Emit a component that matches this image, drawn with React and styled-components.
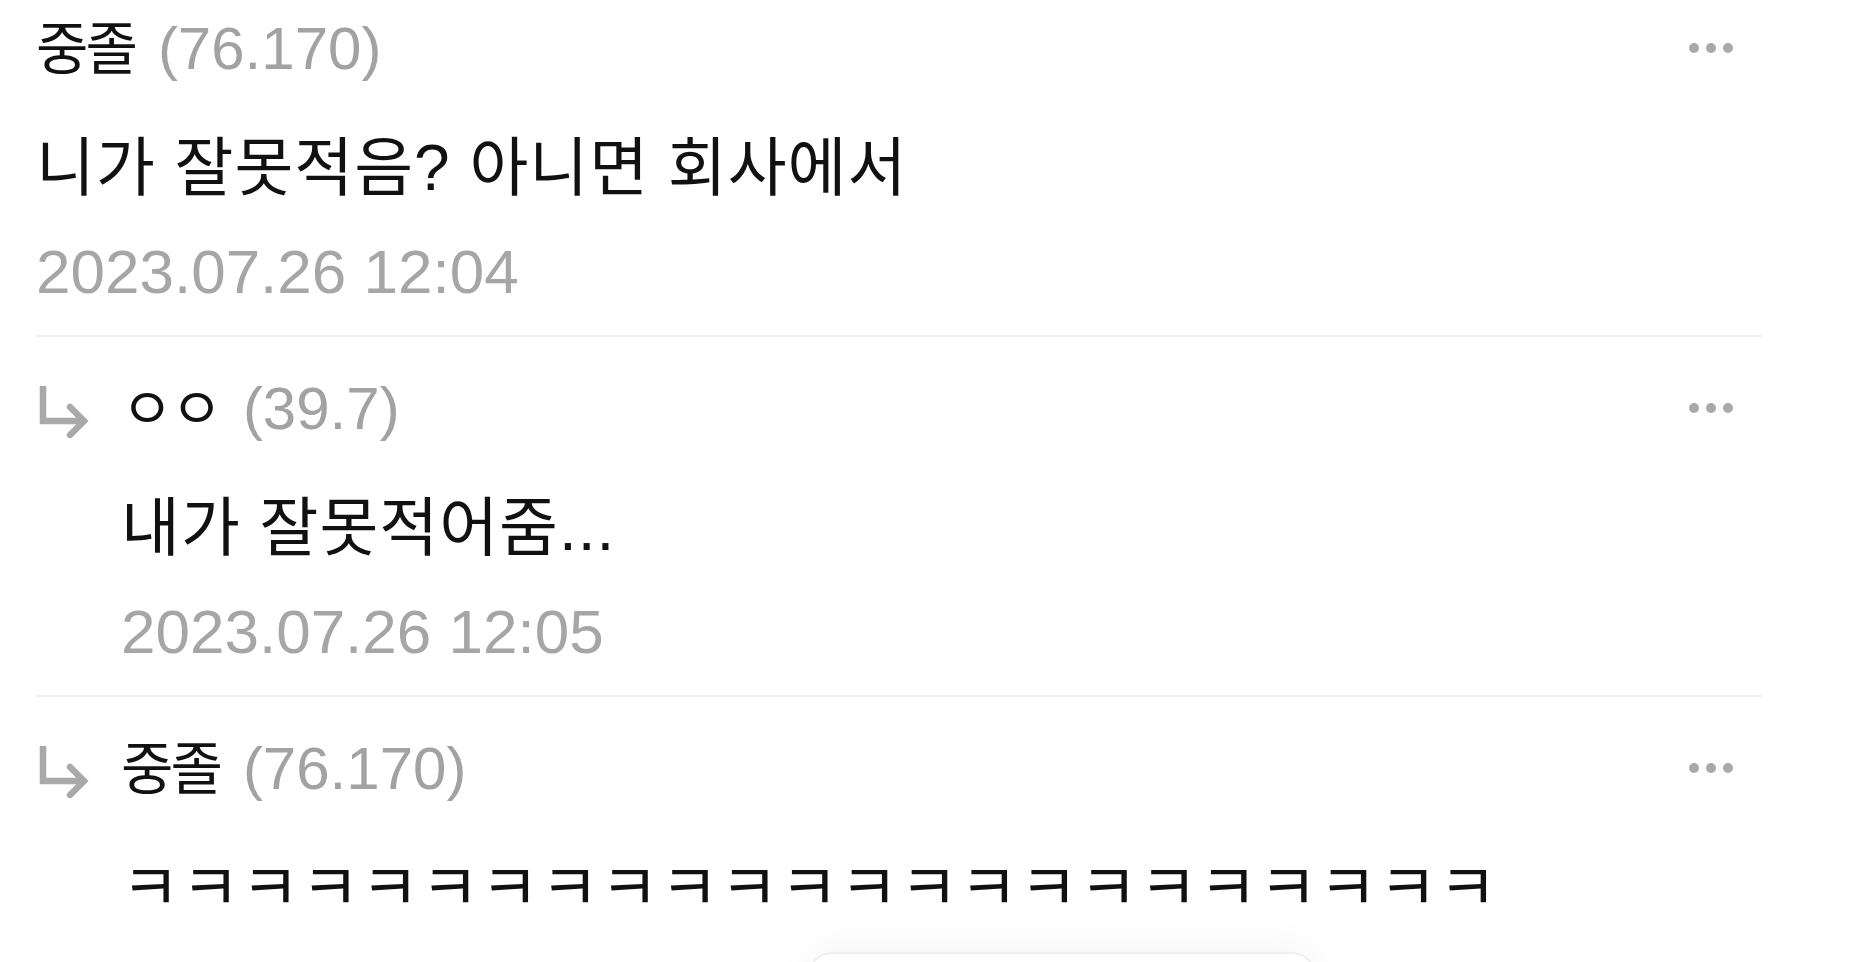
import React from 'react';
import styled, { createGlobalStyle } from 'styled-components';

const Global = createGlobalStyle`
  html, body {
    margin: 0;
    padding: 0;
    background: #ffffff;
    overflow: hidden;
  }
  body {
    font-family: "Liberation Sans", "Noto Sans CJK KR", sans-serif;
    color: #111111;
  }
`;

const Page = styled.main`
  position: relative;
  box-sizing: border-box;
  height: 962px;
  overflow: hidden;
  padding: 0 108px 0 36px;
  background: #ffffff;
`;

const Comment = styled.article`
  display: flex;
  align-items: flex-start;
  padding: ${(p) => (p.$first ? '14px' : '37px')} 0 28px;
  border-bottom: ${(p) => (p.$last ? 'none' : '2px solid #efefef')};
`;

const ReplyMark = styled.div`
  flex: none;
  width: 85px;
  height: 70px;
  display: flex;
  align-items: center;
  padding-left: 2px;
  padding-top: 6px;
  box-sizing: border-box;
`;

const Content = styled.div`
  flex: 1;
  min-width: 0;
  display: flex;
  flex-direction: column;
`;

const Header = styled.div`
  display: flex;
  align-items: center;
  justify-content: space-between;
  height: 70px;
`;

const Author = styled.div`
  display: flex;
  align-items: center;
  line-height: 70px;
  white-space: nowrap;
`;

const Name = styled.span`
  font-size: 57px;
  color: #111111;
  letter-spacing: -3px;
`;

const Score = styled.span`
  font-size: 60px;
  color: #a2a2a2;
  margin-left: 23px;
`;

const More = styled.div`
  display: flex;
  align-items: center;
  gap: 7px;
  margin-right: 29px;
  margin-top: -3px;
`;

const Dot = styled.span`
  width: 10px;
  height: 10px;
  border-radius: 50%;
  background: #a9a9a9;
`;

const Body = styled.p`
  margin: 46px 0 0;
  font-size: 64px;
  line-height: 76px;
  color: #111111;
  white-space: nowrap;
  letter-spacing: 1px;
`;

const Time = styled.div`
  margin-top: 31px;
  font-size: 62px;
  line-height: 70px;
  color: #a6a6a6;
`;

const FloatingBar = styled.div`
  position: absolute;
  left: 808px;
  top: 952px;
  width: 504px;
  height: 80px;
  border-radius: 24px;
  border: 2px solid #efefef;
  background: #ffffff;
  box-shadow: 0 -6px 40px rgba(0, 0, 0, 0.04);
`;

const ReplyArrow = () => (
  <svg width="52" height="60" viewBox="0 0 52 60" aria-hidden="true">
    <path
      d="M5 4 V39 H46"
      fill="none"
      stroke="#a9a9a9"
      strokeWidth="6.5"
      strokeLinejoin="miter"
    />
    <path
      d="M32 25 L46 39 L32 53"
      fill="none"
      stroke="#a9a9a9"
      strokeWidth="6.5"
      strokeLinecap="round"
      strokeLinejoin="miter"
    />
  </svg>
);

const MoreDots = () => (
  <More>
    <Dot />
    <Dot />
    <Dot />
  </More>
);

const comments = [
  {
    id: 1,
    name: '중졸',
    score: '(76.170)',
    body: '니가 잘못적음? 아니면 회사에서',
    time: '2023.07.26 12:04',
    reply: false,
  },
  {
    id: 2,
    name: 'ㅇㅇ',
    score: '(39.7)',
    body: '내가 잘못적어줌...',
    time: '2023.07.26 12:05',
    reply: true,
  },
  {
    id: 3,
    name: '중졸',
    score: '(76.170)',
    body: 'ㅋㅋㅋㅋㅋㅋㅋㅋㅋㅋㅋㅋㅋㅋㅋㅋㅋㅋㅋㅋㅋㅋㅋ',
    time: null,
    reply: true,
  },
];

export default function App() {
  return (
    <>
      <Global />
      <Page>
        {comments.map((c, i) => (
          <Comment key={c.id} $first={i === 0} $last={i === comments.length - 1}>
            {c.reply && (
              <ReplyMark>
                <ReplyArrow />
              </ReplyMark>
            )}
            <Content>
              <Header>
                <Author>
                  <Name>{c.name}</Name>
                  <Score>{c.score}</Score>
                </Author>
                <MoreDots />
              </Header>
              <Body>{c.body}</Body>
              {c.time && <Time>{c.time}</Time>}
            </Content>
          </Comment>
        ))}
        <FloatingBar />
      </Page>
    </>
  );
}
